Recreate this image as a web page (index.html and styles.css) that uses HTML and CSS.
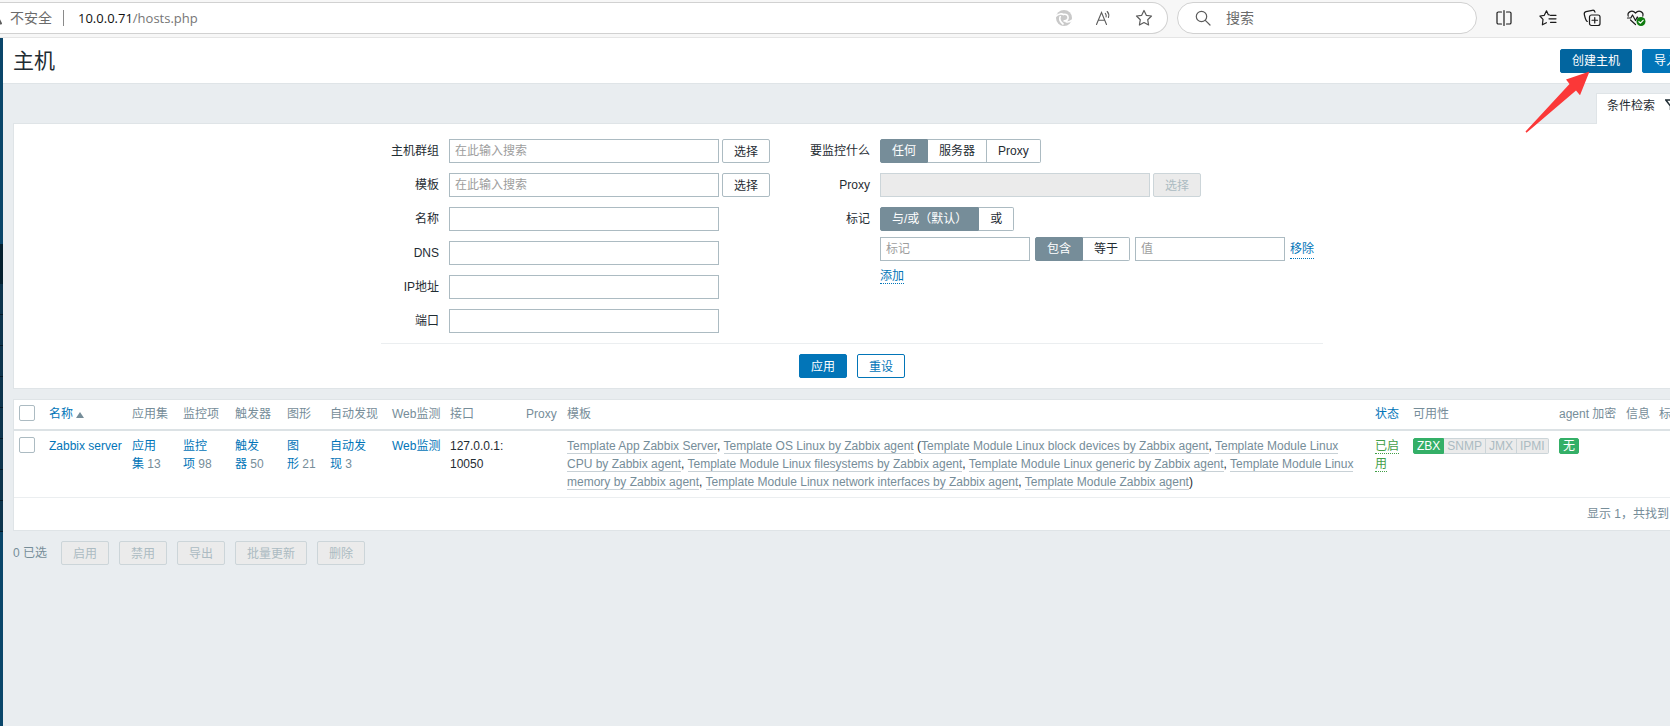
FILE: index.html
```html
<!DOCTYPE html>
<html lang="zh-CN">
<head>
<meta charset="utf-8">
<title>主机</title>
<link rel="stylesheet" href="styles.css">
</head>
<body>
<div class="toolbar">
  <div class="address">
    <svg class="warn" width="10" height="18" viewBox="0 0 10 18"><path d="M-7 14.500H1L-2 8.500" fill="none" stroke="#5c5c5c" stroke-width="2" stroke-linejoin="round"/></svg>
    <span class="insecure">不安全</span>
    <span class="url"><span class="host">10.0.0.71</span>/hosts.php</span>
    <button class="tool small" aria-label="同步">
      <svg width="18" height="18" viewBox="0 0 18 18"><circle cx="9" cy="9" r="8" fill="#c9c9c9"/><path d="M.5 7.500C3.500 4.500 7 4.500 8.500 5.500c2.500-.8 5 .8 4.500 3.700-.5 2-2.500 3-4.500 2.500M5.500 7c-1.300 2.500-.5 6 3 8.500M17 11c-2 2-4.500 2.300-6.500 1.500" fill="none" stroke="#fff" stroke-width="1.600"/></svg>
    </button>
    <button class="tool small" aria-label="朗读">
      <svg width="18" height="18" viewBox="0 0 18 18" fill="none" stroke="#5c5c5c" stroke-width="1.100" stroke-linecap="round"><path d="M1.500 15.500 6.500 3.500l5 12M3.300 11.300h6.400M10.300 4.300c.9 1 1.200 2.200.8 3.600M12.200 2.500c1.600 1.700 2 3.800 1.200 6"/></svg>
    </button>
    <button class="tool small" aria-label="收藏">
      <svg width="18" height="18" viewBox="0 0 18 18" fill="none" stroke="#5c5c5c" stroke-width="1.200" stroke-linejoin="round"><path d="m9 1.500 2.300 4.800 5.200.7-3.800 3.700.9 5.300L9 13.500 4.400 16l.9-5.300L1.500 7l5.200-.7z"/></svg>
    </button>
  </div>
  <label class="search">
    <svg width="16" height="16" viewBox="0 0 16 16" fill="none" stroke="#5c5c5c" stroke-width="1.200" stroke-linecap="round"><circle cx="6.500" cy="6.500" r="5.200"/><path d="m10.300 10.300 4.700 4.700"/></svg>
    <input type="text" placeholder="搜索" aria-label="搜索">
  </label>
  <div class="tools">
    <button class="tool" aria-label="分屏">
      <svg width="18" height="18" viewBox="0 0 18 18" fill="none" stroke="#1b1b1b" stroke-width="1.200" stroke-linecap="round"><path d="M6.500 3H3.300A1.300 1.300 0 0 0 2 4.300v9.400A1.300 1.300 0 0 0 3.300 15h3.200M11.500 3h3.200A1.300 1.300 0 0 1 16 4.300v9.400a1.300 1.300 0 0 1-1.300 1.300h-3.200M9 1.500v15"/></svg>
    </button>
    <button class="tool" aria-label="收藏夹">
      <svg width="18" height="18" viewBox="0 0 18 18" fill="none" stroke="#1b1b1b" stroke-width="1.200" stroke-linecap="round" stroke-linejoin="round"><path d="M10.500 6 9.300 5.700 7.500 1.800 5.300 6.300.9 7 4 10.400l-.6 5.400 4-2.100M11.500 6.300H17M10 9.800h7M11.500 13.300H17"/></svg>
    </button>
    <button class="tool" aria-label="集锦">
      <svg width="18" height="18" viewBox="0 0 18 18" fill="none" stroke="#1b1b1b" stroke-width="1.200" stroke-linecap="round" stroke-linejoin="round"><rect x="6.500" y="6" width="10.500" height="10.500" rx="2"/><path d="M11.750 8.500v5.500M9 11.250h5.500M4.300 12.500C2.800 12 2.200 9.500 1.300 5.500 1 3.700 1.700 2.900 3 2.600l6.300-1.300c1.400-.3 2.300.3 2.700 1.900"/></svg>
    </button>
    <button class="tool" aria-label="浏览器健康">
      <svg width="20" height="18" viewBox="0 0 20 18" fill="none" stroke="#1b1b1b" stroke-width="1.200" stroke-linecap="round" stroke-linejoin="round"><path d="M2.200 7.200C1 3 6 .2 9.500 4 13 .2 18 3 16.800 7.200M1.500 9h3.300l1.700-3 3 5.500 1.800-3.500 1 1.500M4.500 11l5 4.500"/><circle cx="15" cy="12.500" r="4.500" fill="#0f7b0f" stroke="none"/><path d="m12.900 12.700 1.500 1.400 2.700-2.800" stroke="#fff"/></svg>
    </button>
  </div>
</div>

<div class="app">
  <nav class="sidebar" aria-label="导航">
    <div class="side-head"></div>
    <div class="side-item"></div><div class="side-item"></div><div class="side-item"></div><div class="side-item"></div>
    <div class="side-item"></div><div class="side-item"></div><div class="side-item"></div><div class="side-item"></div>
  </nav>
  <div class="page">
    <header class="header">
      <h1>主机</h1>
      <button class="btn primary hover">创建主机</button>
      <button class="btn primary">导入</button>
      <svg class="pointer" width="66" height="62" viewBox="0 0 66 62"><path d="M64.500.500 41 8.500l3.500 4.500L.500 60.500l1 1.200L51 19.500l4 4.800z" fill="#fb3838"/></svg>
    </header>

    <main class="content">
      <div class="tabs">
        <a class="tab" href="#filter">条件检索
          <svg width="14" height="14" viewBox="0 0 14 14" fill="none" stroke="#1f2c33" stroke-width="1.500"><path d="M.800 1h12.400L8.500 7v5.500l-3-2V7z"/></svg>
        </a>
      </div>

      <form class="filter" id="filter">
        <div class="filter-fields">
          <div class="fields left">
            <label for="groups">主机群组</label>
            <div class="line"><input class="wide" id="groups" type="text" placeholder="在此输入搜索"><button type="button" class="btn plain">选择</button></div>
            <label for="templates">模板</label>
            <div class="line"><input class="wide" id="templates" type="text" placeholder="在此输入搜索"><button type="button" class="btn plain">选择</button></div>
            <label for="name">名称</label>
            <div class="line"><input class="wide" id="name" type="text"></div>
            <label for="dns">DNS</label>
            <div class="line"><input class="wide" id="dns" type="text"></div>
            <label for="ip">IP地址</label>
            <div class="line"><input class="wide" id="ip" type="text"></div>
            <label for="port">端口</label>
            <div class="line"><input class="wide" id="port" type="text"></div>
          </div>
          <div class="fields right">
            <span class="caption">要监控什么</span>
            <div class="segment">
              <label><input type="radio" name="monitored" checked><span>任何</span></label>
              <label><input type="radio" name="monitored"><span>服务器</span></label>
              <label><input type="radio" name="monitored"><span>Proxy</span></label>
            </div>
            <label for="proxy">Proxy</label>
            <div class="line"><input class="wide" id="proxy" type="text" disabled><button type="button" class="btn plain" disabled>选择</button></div>
            <span class="caption">标记</span>
            <div class="tags">
              <div class="segment">
                <label><input type="radio" name="evaltype" checked><span>与/或（默认）</span></label>
                <label><input type="radio" name="evaltype"><span>或</span></label>
              </div>
              <div class="tag-row">
                <input class="short" type="text" placeholder="标记" aria-label="标记">
                <div class="segment">
                  <label><input type="radio" name="operator" checked><span>包含</span></label>
                  <label><input type="radio" name="operator"><span>等于</span></label>
                </div>
                <input class="short" type="text" placeholder="值" aria-label="值">
                <a class="dotted" href="#remove">移除</a>
              </div>
              <div><a class="dotted" href="#add">添加</a></div>
            </div>
          </div>
        </div>
        <div class="filter-buttons">
          <button type="button" class="btn primary">应用</button>
          <button type="button" class="btn outline">重设</button>
        </div>
      </form>

      <table class="hosts">
        <colgroup>
          <col class="c-check"><col class="c-name"><col class="c-apps"><col class="c-items"><col class="c-items"><col class="c-graphs"><col class="c-disc"><col class="c-web"><col class="c-iface"><col class="c-proxy"><col><col class="c-status"><col class="c-avail"><col class="c-enc"><col class="c-info"><col class="c-tags">
        </colgroup>
        <thead>
          <tr>
            <th><input type="checkbox" aria-label="全选"></th>
            <th><a href="#name-sort">名称<span class="sort"></span></a></th>
            <th>应用集</th><th>监控项</th><th>触发器</th><th>图形</th><th>自动发现</th><th>Web监测</th><th>接口</th><th>Proxy</th><th>模板</th>
            <th><a href="#status-sort">状态</a></th>
            <th>可用性</th><th>agent 加密</th><th>信息</th><th>标记</th>
          </tr>
        </thead>
        <tbody>
          <tr>
            <td><input type="checkbox" aria-label="Zabbix server"></td>
            <td><a href="#host">Zabbix server</a></td>
            <td class="count"><a href="#apps">应用集</a>&nbsp;13</td>
            <td class="count"><a href="#items">监控项</a>&nbsp;98</td>
            <td class="count"><a href="#triggers">触发器</a>&nbsp;50</td>
            <td class="count"><a href="#graphs">图形</a>&nbsp;21</td>
            <td class="count"><a href="#discovery">自动发现</a>&nbsp;3</td>
            <td class="web"><a href="#web">Web监测</a></td>
            <td>127.0.0.1:<br>10050</td>
            <td></td>
            <td class="templates"><a href="#t1">Template App Zabbix Server</a>, <a href="#t2">Template OS Linux by Zabbix agent</a> (<a href="#t3">Template Module Linux block devices by Zabbix agent</a>, <a href="#t4">Template Module Linux CPU by Zabbix agent</a>, <a href="#t5">Template Module Linux filesystems by Zabbix agent</a>, <a href="#t6">Template Module Linux generic by Zabbix agent</a>, <a href="#t7">Template Module Linux memory by Zabbix agent</a>, <a href="#t8">Template Module Linux network interfaces by Zabbix agent</a>, <a href="#t9">Template Module Zabbix agent</a>)</td>
            <td><a class="dotted enabled" href="#disable">已启用</a></td>
            <td><div class="badges"><span class="badge on">ZBX</span><span class="badge">SNMP</span><span class="badge">JMX</span><span class="badge">IPMI</span></div></td>
            <td><div class="badges"><span class="badge on">无</span></div></td>
            <td></td><td></td>
          </tr>
        </tbody>
        <tfoot>
          <tr><td colspan="16">显示 1，共找到 1</td></tr>
        </tfoot>
      </table>

      <div class="actions">
        <span>0 已选</span>
        <button class="btn plain" disabled>启用</button>
        <button class="btn plain" disabled>禁用</button>
        <button class="btn plain" disabled>导出</button>
        <button class="btn plain" disabled>批量更新</button>
        <button class="btn plain" disabled>删除</button>
      </div>
    </main>
  </div>
</div>
</body>
</html>
```

FILE: styles.css
```css
* { box-sizing: border-box; }

body {
  margin: 0;
  min-height: 100vh;
  display: flex;
  flex-direction: column;
  overflow: hidden;
  background: #e9edf0;
  color: #1f2c33;
  font: 12px/18px "Liberation Sans", "Noto Sans CJK SC", sans-serif;
}

button, input { font: inherit; color: inherit; }
a { color: #0275b8; text-decoration: none; }

/* Browser toolbar */
.toolbar {
  display: flex;
  gap: 9px;
  height: 38px;
  padding-top: 2px;
  background: #f7f7f7;
  border-bottom: 1px solid #e5e5e5;
  font: 14px/20px "Open Sans", "Noto Sans CJK SC", sans-serif;
  color: #6b6b6b;
}
.address, .search {
  display: flex;
  align-items: center;
  height: 32px;
  background: #fff;
  border: 1px solid #d1d1d1;
}
.address {
  flex: 1;
  border-left: 0;
  border-radius: 0 16px 16px 0;
  padding-right: 3px;
}
.insecure {
  padding-right: 11px;
  border-right: 1px solid #8a8a8a;
  line-height: 16px;
}
.url { flex: 1; padding-left: 14px; font-size: 13px; color: #767676; }
.host { color: #111; }
.tool {
  display: flex;
  align-items: center;
  justify-content: center;
  width: 44px;
  height: 32px;
  padding: 0;
  border: 0;
  background: none;
}
.tool.small { width: 40px; height: 30px; }
.search {
  width: 300px;
  gap: 15px;
  padding: 0 17px;
  border-radius: 16px;
}
.search input { flex: 1; min-width: 0; border: 0; padding: 0; background: none; outline: 0; }
.search input::placeholder { color: #6b6b6b; }
.tools { display: flex; margin-left: -4px; padding-right: 12px; }

/* Application frame */
.app { flex: 1; display: flex; }
.sidebar { flex: none; width: 3px; padding-top: 206px; background: #0a466a; }
.side-head { height: 40px; background: #04202f; }
.side-item { height: 31px; background: #0c344d; border-bottom: 1px solid #041a28; }
.page { flex: none; width: calc(100% + 28px); }

.header {
  position: relative;
  display: flex;
  align-items: center;
  gap: 10px;
  height: 46px;
  padding: 0 11px 0 10px;
  background: #fff;
  border-bottom: 1px solid #dfe4e7;
}
.header h1 { flex: 1; margin: 0; font-size: 21px; line-height: 24px; font-weight: 400; }
.pointer { position: absolute; top: 33px; right: 110px; pointer-events: none; }

.btn {
  height: 24px;
  padding: 0 11px;
  border: 1px solid #0275b8;
  border-radius: 2px;
  line-height: 22px;
  white-space: nowrap;
}
.btn.primary { background: #0275b8; color: #fff; }
.btn.hover { background: #02659f; border-color: #02659f; }
.btn.outline { background: #fff; color: #0275b8; }
.btn.plain { background: #fff; border-color: #acbbc2; }
.btn:disabled { background: #ebebeb; border-color: #ccd5d9; color: #acbbc2; }
.filter .btn, .actions .btn { padding-top: 2px; line-height: 20px; }

.content { padding: 9px 10px; }

/* Filter */
.tabs { display: flex; justify-content: flex-end; }
.tab {
  display: flex;
  align-items: center;
  gap: 10px;
  height: 31px;
  margin-bottom: -1px;
  padding: 0 11px 6px 10px;
  background: #fff;
  border: 1px solid #dfe4e7;
  border-bottom: 0;
  color: #1f2c33;
  z-index: 1;
}
.filter { padding: 15px 0 10px; background: #fff; border: 1px solid #dfe4e7; }
.filter-fields {
  display: flex;
  width: 942px;
  margin: 0 auto;
  padding-bottom: 10px;
  border-bottom: 1px solid #ebeef0;
}
.fields { display: grid; grid-template-columns: 58px 1fr; align-content: start; gap: 10px; }
.fields.left { width: 431px; }
.fields.right { width: 511px; }
.fields > label, .caption { text-align: right; line-height: 24px; white-space: nowrap; }
.caption { justify-self: end; }
.line { display: flex; gap: 3px; }
.filter input[type="text"] {
  height: 24px;
  padding: 0 5px;
  border: 1px solid #acbbc2;
  border-radius: 0;
  background: #fff;
}
.filter input[type="text"]:disabled { background: #ebebeb; border-color: #ccd5d9; }
.filter ::placeholder { color: #9d9d9d; }
.filter .wide { width: 270px; }
.filter .short { width: 150px; }
.segment { display: flex; height: 24px; }
.segment input { position: absolute; opacity: 0; margin: 0; }
.segment span {
  display: block;
  height: 24px;
  padding: 0 11px;
  border: 1px solid #acbbc2;
  line-height: 22px;
  white-space: nowrap;
}
.segment label + label span { border-left: 0; }
.segment label:first-child span { border-radius: 2px 0 0 2px; }
.segment label:last-child span { border-radius: 0 2px 2px 0; }
.segment input:checked + span { background: #768d99; border-color: #768d99; color: #fff; }
.tags { display: grid; gap: 6px; }
.tag-row { display: flex; align-items: center; gap: 5px; }
.dotted { border-bottom: 1px dotted #0275b8; }
.filter-buttons { display: flex; justify-content: center; gap: 10px; padding-top: 10px; }

/* Host list */
.hosts {
  width: 100%;
  margin-top: 10px;
  table-layout: fixed;
  border-collapse: separate;
  border-spacing: 0;
  background: #fff;
  border: 1px solid #dfe4e7;
}
.c-check { width: 30px; }
.c-name { width: 83px; }
.c-apps { width: 51px; }
.c-items { width: 52px; }
.c-graphs { width: 43px; }
.c-disc { width: 62px; }
.c-web { width: 58px; }
.c-iface { width: 76px; }
.c-proxy { width: 41px; }
.c-status { width: 38px; }
.c-avail { width: 146px; }
.c-enc { width: 67px; }
.c-info { width: 33px; }
.c-tags { width: 36px; }
.hosts th, .hosts td { padding: 6px 5px; text-align: left; vertical-align: top; font-weight: 400; }
.hosts th {
  padding: 5px 5px 6px;
  border-bottom: 2px solid #dce2e5;
  color: #768d99;
  white-space: nowrap;
}
.hosts tbody td { border-bottom: 1px solid #ebeef0; }
.hosts tfoot td { padding: 7px 11px; text-align: right; color: #768d99; }
.hosts .count { color: #768d99; }
.hosts .web { white-space: nowrap; }
.hosts input {
  appearance: none;
  display: block;
  width: 16px;
  height: 16px;
  margin: 0;
  border: 1px solid #acbbc2;
  border-radius: 2px;
  background: #fff;
}
.sort {
  display: inline-block;
  margin-left: 3px;
  border: 4px solid transparent;
  border-top: 0;
  border-bottom: 6px solid #768d99;
}
.templates a { color: #768d99; border-bottom: 1px solid #c8d1d6; }
.enabled { color: #429e47; border-color: #429e47; }
.badges { display: flex; padding-top: 1px; }
.badge {
  height: 16px;
  padding: 0 3px;
  background: #ebebeb;
  border: 1px solid #ccd5d9;
  color: #acbbc2;
  line-height: 14px;
}
.badge + .badge { border-left: 0; }
.badge:first-child { border-radius: 2px 0 0 2px; }
.badge:last-child { border-radius: 0 2px 2px 0; }
.badge:only-child { border-radius: 2px; }
.badge.on { background: #34af67; border-color: #34af67; color: #fff; }

.actions { display: flex; align-items: center; gap: 10px; margin-top: 10px; color: #768d99; }
.actions span { margin-right: 4px; }
```
